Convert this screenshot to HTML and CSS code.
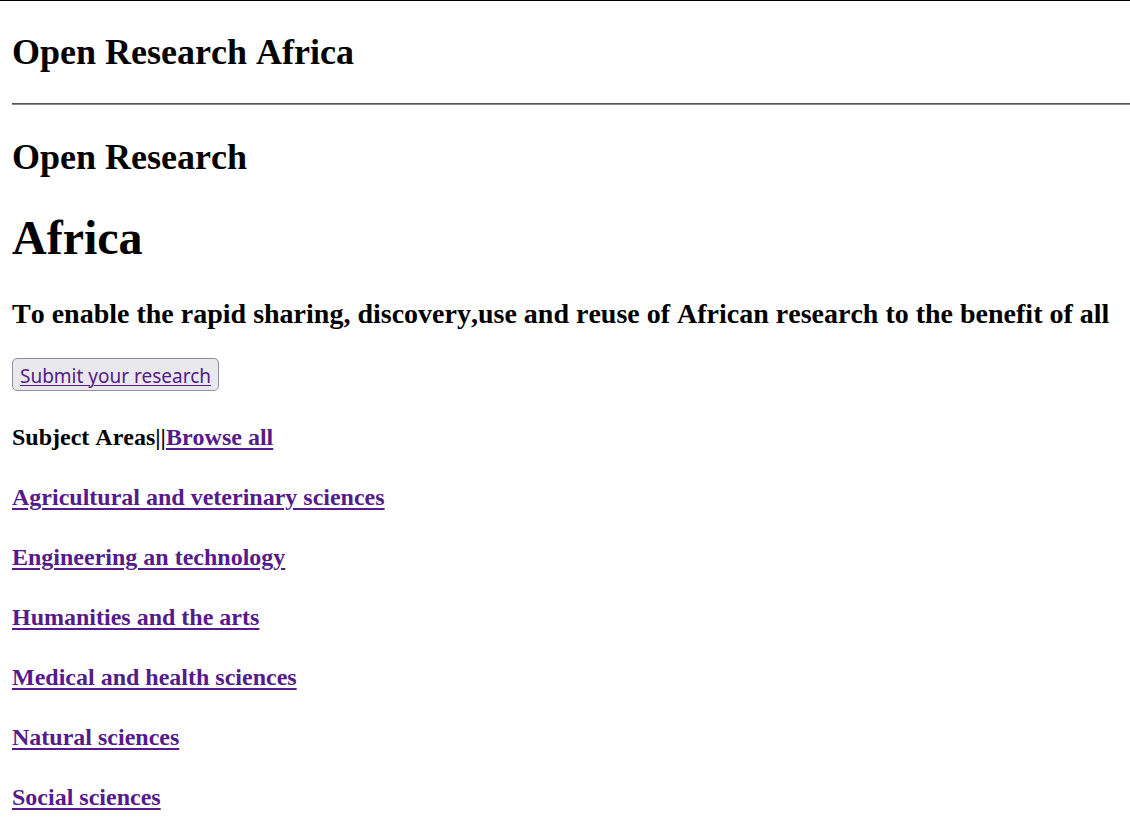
FILE: index.html
```html
<!DOCTYPE html>
<html lang="en">
<head>
<meta charset="utf-8">
<title>Open Research Africa</title>
<link rel="stylesheet" href="styles.css">
</head>
<body class="page">
<header class="site-header">
<h2 class="heading">Open Research Africa</h2>
</header>
<main class="content">
<h2 class="heading">Open Research</h2>
<h1 class="title">Africa</h1>
<h3 class="tagline">To enable the rapid sharing, discovery,use and reuse of African research to the benefit of all</h3>
<button class="submit" type="button"><a class="submit-link" href="#submit">Submit your research</a></button>
<nav class="subjects">
<h4 class="subject">Subject Areas||<a class="link" href="#all">Browse all</a></h4>
<h4 class="subject"><a class="link" href="#agricultural">Agricultural and veterinary sciences</a></h4>
<h4 class="subject"><a class="link" href="#engineering">Engineering an technology</a></h4>
<h4 class="subject"><a class="link" href="#humanities">Humanities and the arts</a></h4>
<h4 class="subject"><a class="link" href="#medical">Medical and health sciences</a></h4>
<h4 class="subject"><a class="link" href="#natural">Natural sciences</a></h4>
<h4 class="subject"><a class="link" href="#social">Social sciences</a></h4>
</nav>
</main>
</body>
</html>
```
FILE: styles.css
```css
.page {
  margin: 0;
  padding-left: 12px;
  border-top: 1px solid #000;
  background: #fff;
  color: #000;
  font-family: "Liberation Serif", "Times New Roman", serif;
  font-kerning: none;
}

.site-header {
  padding: 30px 0;
  border-bottom: 1px solid #555;
}

.content {
  padding-top: 31px;
  border-top: 1px solid #888;
}

.heading {
  margin: 0;
  font-size: 36px;
  line-height: 42px;
}

.title {
  margin: 32px 0;
  font-size: 48px;
  line-height: 56px;
}

.tagline {
  margin: 0 0 28px;
  font-size: 28px;
  line-height: 32px;
}

.submit {
  display: block;
  padding: 6px 7px 2px;
  border: 1px solid #8f8f9d;
  border-radius: 5px;
  background: #e9e9ed;
  font-family: "Noto Sans", sans-serif;
  font-size: 19px;
  line-height: 23px;
}

.submit-link {
  color: #551a8b;
  text-decoration: underline 1px;
  text-underline-offset: 2px;
}

.link {
  color: #551a8b;
  text-decoration: underline 2px;
  text-underline-offset: 3px;
}

.subjects {
  display: grid;
  gap: 32px;
  padding-top: 32px;
}

.subject {
  margin: 0;
  font-size: 24px;
  line-height: 28px;
}
```
